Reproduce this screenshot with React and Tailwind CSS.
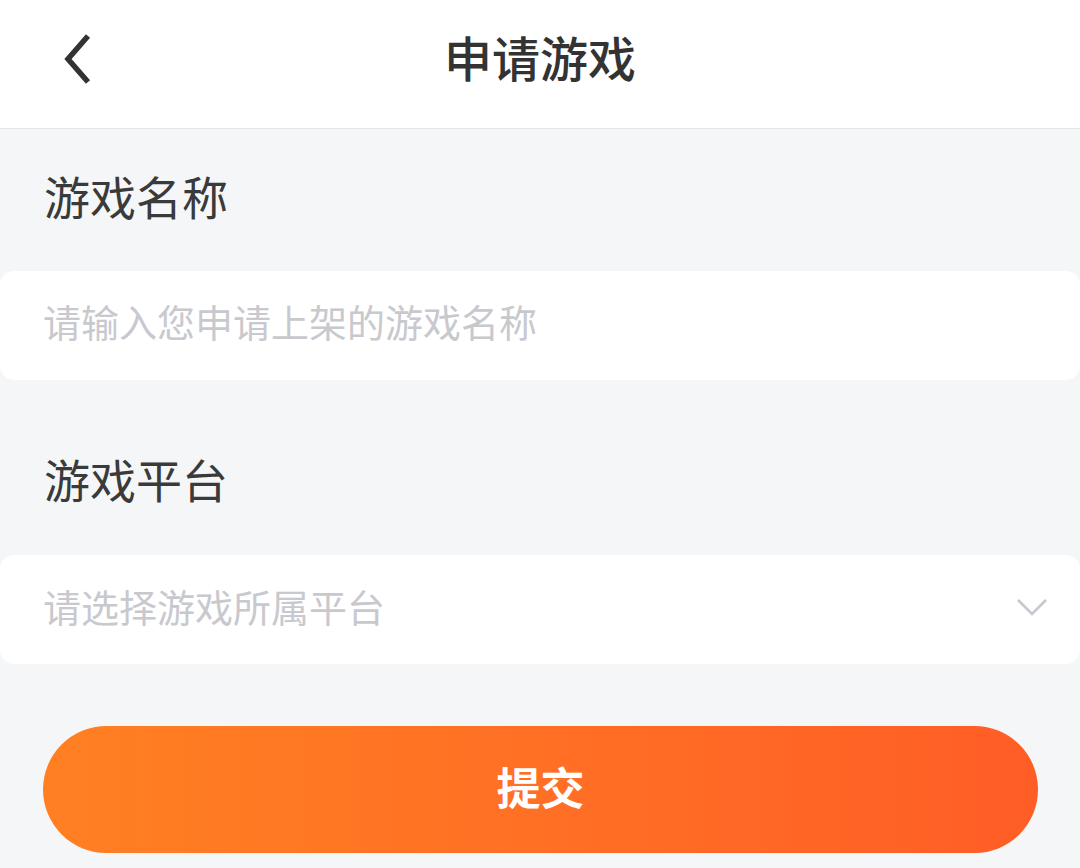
import React from "react";

export default function App() {
  const font = { fontFamily: '"Noto Sans CJK SC", "Noto Sans", sans-serif' };
  return (
    <div className="w-[1080px] h-[868px] bg-[#f5f6f8] flex flex-col overflow-hidden" style={font}>
      <header className="h-[129px] bg-white border-b border-[#e6e6e8] grid grid-cols-[1fr_auto_1fr] items-center pb-[16px]">
        <div className="pl-[60px] flex items-center pt-[6px]">
          <svg width="36" height="56" viewBox="0 0 36 56" fill="none">
            <path d="M28 5 L8 28 L28 51" stroke="#333333" strokeWidth="5.5" strokeLinecap="butt" strokeLinejoin="miter" />
          </svg>
        </div>
        <h1 className="text-[48px] leading-none font-medium text-[#333333]">申请游戏</h1>
        <div />
      </header>

      <div className="h-[142px] flex items-center pl-[44px] pb-[10px]">
        <span className="text-[46px] leading-none text-[#3a3a3a]">游戏名称</span>
      </div>
      <div className="h-[109px] bg-white rounded-[14px] flex items-center pl-[43px]">
        <span className="text-[38px] leading-none text-[#c8c9ce] -mt-[9px]">请输入您申请上架的游戏名称</span>
      </div>

      <div className="mt-[33px] h-[142px] flex items-center pl-[44px] pb-[12px]">
        <span className="text-[46px] leading-none text-[#3a3a3a]">游戏平台</span>
      </div>
      <div className="h-[109px] bg-white rounded-[14px] flex items-center justify-between pl-[43px] pr-[32px]">
        <span className="text-[38px] leading-none text-[#c8c9ce] -mt-[8px]">请选择游戏所属平台</span>
        <svg width="32" height="20" viewBox="0 0 32 20" fill="none" className="-mt-[6px]">
          <path d="M2 3 L16 17 L30 3" stroke="#c4c7cd" strokeWidth="2.5" />
        </svg>
      </div>

      <div className="mt-[62px] pl-[43px] pr-[42px]">
        <button className="w-full h-[127px] rounded-full bg-linear-to-r from-[#ff8022] to-[#ff5d26] flex items-center justify-center pb-[8px]">
          <span className="text-[44px] leading-none font-bold text-white">提交</span>
        </button>
      </div>
    </div>
  );
}
